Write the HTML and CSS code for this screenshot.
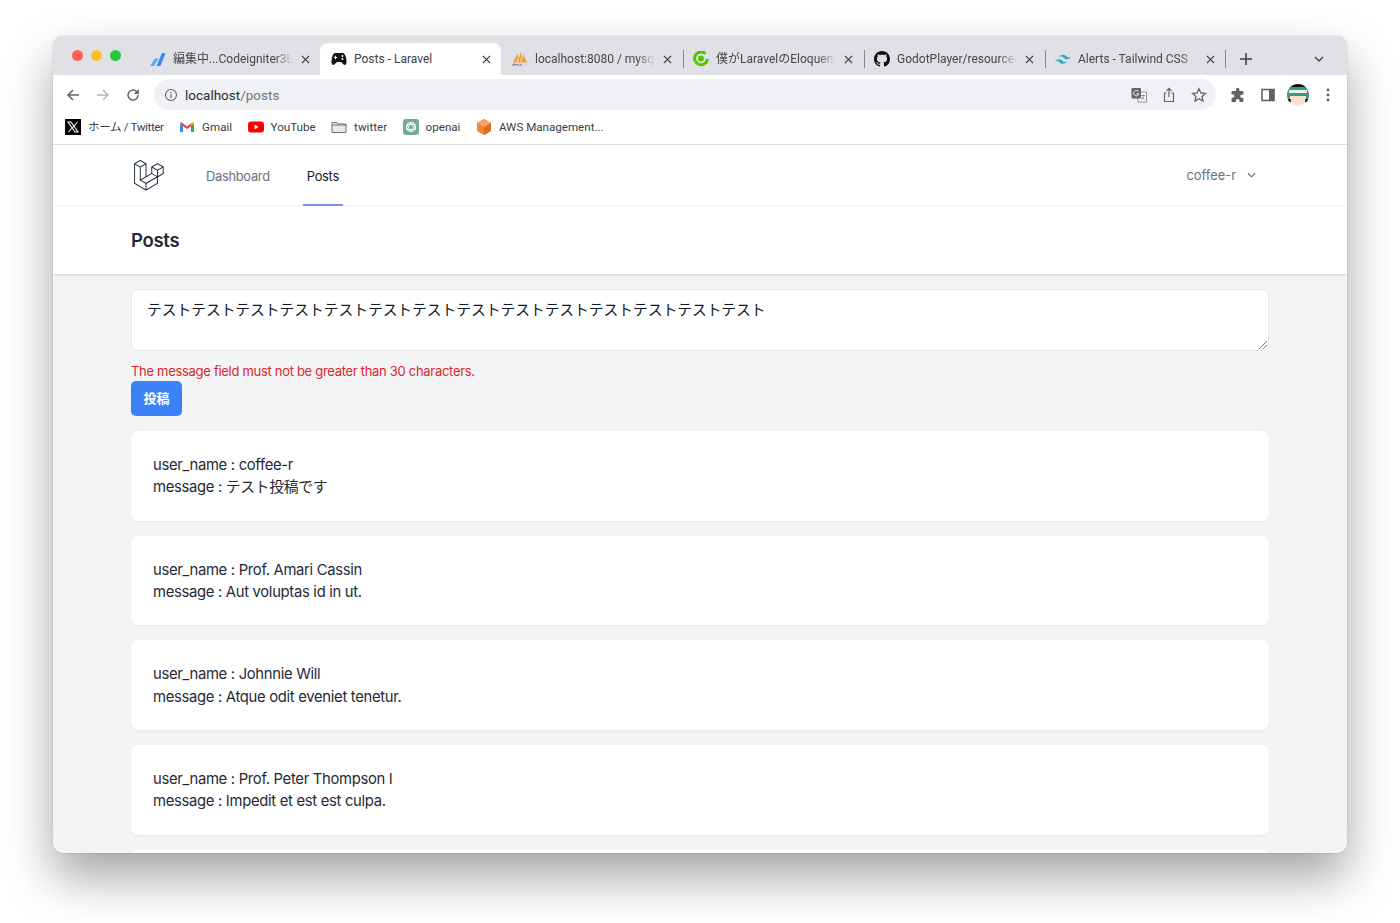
FILE: index.html
```html
<!DOCTYPE html>
<html lang="ja">
<head>
  <meta charset="UTF-8">
  <title>Posts - Laravel</title>
  <link rel="stylesheet" href="styles.css">
</head>
<body>
  <svg class="defs" width="0" height="0">
    <symbol id="close" viewBox="0 0 10 10"><path d="M1 1l8 8M9 1l-8 8" stroke="#3c4043" stroke-width="1.400"/></symbol>
  </svg>
  <div class="window">
    <div class="tabstrip">
      <div class="lights"><i class="red"></i><i class="yellow"></i><i class="green"></i></div>
      <div class="tab">
        <svg class="fav" viewBox="0 0 16 16"><path d="M0 15 5 7.500h3.500L4 15z" fill="#45b0f7"/><path d="M6.500 15 12 2h3.500L10.500 15z" fill="#3b86f5"/></svg>
        <span class="tab-title">編集中...Codeigniter3Laravel</span>
        <svg class="tab-x"><use href="#close"/></svg>
      </div>
      <div class="tab active">
        <svg class="fav" viewBox="0 0 16 16"><path d="M4.500 2h7c2 0 3 2 3.700 5.500.6 3.500.5 6-1.200 6.500-1.600.4-3-2.800-4-3h-4c-1 .2-2.400 3.400-4 3-1.700-.5-1.800-3-1.200-6.500C1.500 4 2.500 2 4.500 2z" fill="#111"/><path d="M4.500 4.800v3.400M2.800 6.500h3.400" stroke="#fff" stroke-width="1.100"/><circle cx="11.500" cy="5" r="1" fill="#fff"/><circle cx="11.500" cy="8" r="1" fill="#fff"/></svg>
        <span class="tab-title">Posts - Laravel</span>
        <svg class="tab-x"><use href="#close"/></svg>
      </div>
      <div class="tab">
        <svg class="fav" viewBox="0 0 16 16"><path d="M1 11.500 6 2l.5 9.500zM5.500 11.500 9 .5l1 11zM9.800 11.500l1.200-8 4 8z" fill="#f29a2e"/><path d="M3 11.500 6.500 6l.5 5.500zM7.500 11.500 9 6l1 5.500z" fill="#f7c27a"/><path d="M1 15v-2h1.500v1H1M4 15v-2l1 1 1-1v2M7.500 15l1-2 1 2" fill="none" stroke="#4a5a78" stroke-width=".6"/></svg>
        <span class="tab-title">localhost:8080 / mysql / laravel</span>
        <svg class="tab-x"><use href="#close"/></svg>
      </div>
      <div class="tab sep">
        <svg class="fav" viewBox="0 0 16 16"><path d="M12.500 2.800A6.400 6.400 0 1 0 14.400 8" fill="none" stroke="#52c400" stroke-width="3"/><circle cx="8" cy="7.500" r="2.900" fill="#52c400"/></svg>
        <span class="tab-title">僕がLaravelのEloquentを使う理由</span>
        <svg class="tab-x"><use href="#close"/></svg>
      </div>
      <div class="tab sep">
        <svg class="fav" viewBox="0 0 16 16"><path fill="#111" d="M8 0C3.580 0 0 3.580 0 8c0 3.540 2.290 6.530 5.470 7.590.4.070.55-.17.55-.38 0-.19-.01-.82-.01-1.490-2.010.37-2.530-.49-2.690-.94-.09-.23-.48-.94-.82-1.130-.28-.15-.68-.52-.01-.53.630-.01 1.080.58 1.230.82.720 1.210 1.870.87 2.330.66.070-.52.280-.87.510-1.070-1.780-.2-3.640-.89-3.640-3.950 0-.87.310-1.590.820-2.150-.08-.2-.36-1.020.08-2.120 0 0 .67-.21 2.200.820.640-.18 1.320-.27 2-.27s1.360.09 2 .27c1.530-1.040 2.200-.82 2.200-.82.440 1.100.16 1.920.08 2.120.51.560.82 1.270.82 2.150 0 3.070-1.870 3.750-3.650 3.950.29.250.54.730.54 1.480 0 1.070-.01 1.930-.01 2.200 0 .21.150.46.550.38A8.010 8.010 0 0 0 16 8c0-4.420-3.580-8-8-8z"/></svg>
        <span class="tab-title">GodotPlayer/resources/views</span>
        <svg class="tab-x"><use href="#close"/></svg>
      </div>
      <div class="tab sep sep-end">
        <svg class="fav" viewBox="1.400 1.500 13.200 13.200"><path d="M8 4.500C6.300 4.500 5.200 5.300 4.700 7c.7-.9 1.400-1.200 2.300-1 .5.100.9.500 1.300.9.700.7 1.400 1.400 3 1.400 1.700 0 2.800-.8 3.300-2.500-.7.900-1.400 1.200-2.300 1-.5-.1-.9-.5-1.300-.9C10.300 5.200 9.600 4.500 8 4.500zM4.700 8.300C3 8.300 1.900 9.100 1.400 10.800c.7-.9 1.400-1.200 2.300-1 .5.100.9.500 1.300.9.700.7 1.400 1.400 3 1.400 1.700 0 2.800-.8 3.300-2.500-.7.900-1.400 1.200-2.300 1-.5-.1-.9-.5-1.300-.9-.7-.7-1.400-1.400-3-1.400z" fill="#38a9b8"/></svg>
        <span class="tab-title">Alerts - Tailwind CSS</span>
        <svg class="tab-x"><use href="#close"/></svg>
      </div>
      <svg class="newtab" viewBox="0 0 12 12"><path d="M6 0v12M0 6h12" stroke="#3c4043" stroke-width="1.600"/></svg>
      <svg class="tabmenu" viewBox="0 0 10 6"><path d="M1 1l4 4 4-4" fill="none" stroke="#3c4043" stroke-width="1.300"/></svg>
    </div>

    <div class="toolbar">
      <svg class="tool" viewBox="0 0 16 16"><path d="M14 8H3M8 3 3 8l5 5" fill="none" stroke="#5f6368" stroke-width="1.500"/></svg>
      <svg class="tool dim" viewBox="0 0 16 16"><path d="M2 8h11M8 3l5 5-5 5" fill="none" stroke="#b4b6b9" stroke-width="1.500"/></svg>
      <svg class="tool" viewBox="0 0 16 16"><path d="M13 8a5 5 0 1 1-1.500-3.500L13 6" fill="none" stroke="#5f6368" stroke-width="1.500"/><path d="M13.800 2v5h-5z" fill="#5f6368"/></svg>
      <div class="omnibox">
        <svg class="info" viewBox="0 0 14 14"><circle cx="7" cy="7" r="5.500" fill="none" stroke="#5f6368" stroke-width="1.100"/><path d="M7 6.200V10M7 4v1.200" stroke="#5f6368" stroke-width="1.200"/></svg>
        <span class="url"><b>localhost</b>/posts</span>
        <svg class="omni-icon" viewBox="0 0 16 16"><path d="M6 5h9.500v10H7z" fill="#fff" stroke="#8a8d91"/><rect x=".5" y="1" width="9.500" height="10.500" rx="1" fill="#5f6368"/><path d="M7.500 4.500A2.700 2.700 0 1 0 8 6.800H5.500" fill="none" stroke="#fff" stroke-width="1"/><path d="M10 8.500h4M12 7.500v1M13.300 8.500c-.5 2-2 3.500-3.300 4M10.500 10c.8 1.300 2 2 3 2.400" fill="none" stroke="#5f6368" stroke-width=".7"/></svg>
        <svg class="omni-icon" viewBox="0 0 16 16"><path d="M5.500 6H3.500v8.500h9V6h-2M8 10V1.500M5.500 3.800 8 1.300l2.500 2.500" fill="none" stroke="#5f6368" stroke-width="1.200"/></svg>
        <svg class="omni-icon" viewBox="0 0 16 16"><path d="M8 1.800l1.900 4.200 4.500.5-3.400 3 1 4.500L8 11.700 4 14l1-4.500-3.400-3 4.500-.5z" fill="none" stroke="#5f6368" stroke-width="1.300"/></svg>
      </div>
      <svg class="tool-r" viewBox="0 0 16 16"><path d="M6 2.500a1.700 1.700 0 0 1 3.400 0V4h3a1 1 0 0 1 1 1v2.500h-1.300a1.800 1.800 0 0 0 0 3.600h1.300V14a1 1 0 0 1-1 1H9.500v-1.200a1.800 1.800 0 0 0-3.600 0V15H2.500a1 1 0 0 1-1-1v-3.200h1.200a1.800 1.800 0 0 0 0-3.600H1.500V5a1 1 0 0 1 1-1H6z" fill="#5f6368"/></svg>
      <svg class="tool-r" viewBox="0 0 16 16"><rect x="2" y="2.500" width="12" height="11" fill="none" stroke="#5f6368" stroke-width="1.600"/><rect x="9" y="2.500" width="5" height="11" fill="#5f6368"/></svg>
      <svg class="avatar" viewBox="0 0 22 22">
        <clipPath id="avatar-clip"><circle cx="11" cy="11" r="11"/></clipPath>
        <g clip-path="url(#avatar-clip)">
          <rect width="22" height="22" fill="#fbe1cf"/>
          <rect width="22" height="4" fill="#111"/>
          <path d="M0 15V3h22v12h-3v-3H3v3z" fill="#3c9a75"/>
          <rect x="2" y="6" width="18" height="3" fill="#e8f1ec"/>
          <path d="M0 15h3.500l.5 3H1zM22 15h-3.500l-.5 3h3z" fill="#111"/>
        </g>
      </svg>
      <svg class="dots" viewBox="0 0 4 16"><circle cx="2" cy="3" r="1.400" fill="#5f6368"/><circle cx="2" cy="8" r="1.400" fill="#5f6368"/><circle cx="2" cy="13" r="1.400" fill="#5f6368"/></svg>
    </div>

    <div class="bookmarks">
      <span class="bm bm-ja"><svg class="fav" viewBox="0 0 16 16"><rect width="16" height="16" fill="#000"/><path d="M3 3h3l7 10h-3zM12.500 3 3.500 13" fill="none" stroke="#fff" stroke-width="1.100"/></svg>ホーム / Twitter</span>
      <span class="bm"><svg class="fav" viewBox="0 0 16 16"><path d="M1 5l7 5 7-5-1-2-6 4.500L2 3z" fill="#ea4335"/><path d="M1 5v8h3V7z" fill="#4285f4"/><path d="M15 5v8h-3V7z" fill="#34a853"/><path d="M12 7l3-2-1-2-2 1.500z" fill="#fbbc04"/></svg>Gmail</span>
      <span class="bm"><svg class="fav" viewBox="0 0 16 16"><rect y="2.500" width="16" height="11" rx="3" fill="#f00"/><path d="M6.500 5.500v5l4-2.500z" fill="#fff"/></svg>YouTube</span>
      <span class="bm"><svg class="fav" viewBox="0 0 16 16"><path d="M1 3.500h5l1 1.500h8v8.500H1z" fill="#e8e9eb" stroke="#6e7175"/><path d="M1 6h14" stroke="#6e7175"/></svg>twitter</span>
      <span class="bm"><svg class="fav" viewBox="0 0 16 16"><rect width="16" height="16" rx="3" fill="#74aa9c"/><circle cx="8" cy="8" r="4.500" fill="none" stroke="#fff" stroke-width="1.100"/><path d="M8 3.500 12 10.500H4z" fill="none" stroke="#fff" stroke-width=".8"/><path d="M8 12.500 4 5.500h8z" fill="none" stroke="#fff" stroke-width=".8"/></svg>openai</span>
      <span class="bm"><svg class="fav" viewBox="0 0 16 16"><path d="M8 0 15 4v8l-7 4-7-4V4z" fill="#f58536"/><path d="M8 8 15 4v8l-7 4z" fill="#d96d1f"/><path d="M8 0 15 4 8 8 1 4z" fill="#f9a15c"/></svg>AWS Management...</span>
    </div>

    <div class="page">
      <nav class="nav">
        <svg class="logo" viewBox="0 0 50 52"><path fill="#1f2937" d="M49.626 11.564a.809.809 0 0 1 .028.209v10.972a.8.8 0 0 1-.402.694l-9.209 5.302V39.25c0 .286-.152.55-.4.694L20.42 51.01c-.044.025-.092.041-.14.058-.018.006-.035.017-.054.022a.805.805 0 0 1-.41 0c-.022-.006-.042-.018-.063-.026-.044-.016-.09-.03-.132-.054L.402 39.944A.801.801 0 0 1 0 39.25V6.334c0-.072.01-.142.028-.21.006-.023.02-.044.028-.067.015-.042.029-.085.051-.124.015-.026.037-.047.055-.071.023-.032.044-.065.071-.093.023-.023.053-.04.079-.06.029-.024.055-.05.088-.069h.001l9.61-5.533a.802.802 0 0 1 .8 0l9.61 5.533h.002c.032.02.059.045.088.068.026.02.055.038.078.06.028.029.048.062.072.094.017.024.04.045.054.071.023.04.036.082.052.124.008.023.022.044.028.068a.809.809 0 0 1 .028.209v20.559l8.008-4.611v-10.51c0-.07.01-.141.028-.208.007-.024.02-.045.028-.068.016-.042.03-.085.052-.124.015-.026.037-.047.054-.071.024-.032.044-.065.072-.093.023-.023.052-.04.078-.06.03-.024.056-.05.088-.069h.001l9.611-5.533a.801.801 0 0 1 .8 0l9.61 5.533c.034.02.06.045.09.068.025.02.054.038.077.06.028.029.048.062.072.094.018.024.04.045.054.071.023.039.036.082.052.124.009.023.022.044.028.068zm-1.574 10.718v-9.124l-3.363 1.936-4.646 2.675v9.124l8.01-4.611zm-9.61 16.505v-9.13l-4.57 2.61-13.05 7.448v9.216l17.62-10.144zM1.602 7.719v31.068L19.22 48.93v-9.214l-9.204-5.209-.003-.002-.004-.002c-.031-.018-.057-.044-.086-.066-.025-.02-.054-.036-.076-.058l-.002-.003c-.026-.025-.044-.056-.066-.084-.02-.027-.044-.05-.06-.078l-.001-.003c-.018-.03-.029-.066-.042-.1-.013-.03-.03-.058-.038-.09v-.001c-.01-.038-.012-.078-.016-.117-.004-.03-.012-.06-.012-.09v-.002-21.481L4.965 9.654 1.602 7.72zm8.81-5.994L2.405 6.334l8.005 4.609 8.006-4.61-8.006-4.608zm4.164 28.764l4.645-2.674V7.719l-3.363 1.936-4.646 2.675v20.096l3.364-1.937zM39.243 7.164l-8.006 4.609 8.006 4.609 8.005-4.61-8.005-4.608zm-.801 10.605l-4.646-2.675-3.363-1.936v9.124l4.645 2.674 3.364 1.937v-9.124zM20.02 38.33l11.743-6.704 5.87-3.35-8-4.606-9.211 5.303-8.395 4.833 7.993 4.524z"/></svg>
        <a class="nav-link">Dashboard</a>
        <a class="nav-link current">Posts</a>
        <div class="user">coffee-r
          <svg class="caret" viewBox="0 0 10 6"><path d="M1 1l4 4 4-4" fill="none" stroke="#6b7280" stroke-width="1.300"/></svg>
        </div>
      </nav>
      <header class="head"><h2>Posts</h2></header>
      <main class="main">
        <div class="composer">テストテストテストテストテストテストテストテストテストテストテストテストテストテスト
          <svg class="grip" viewBox="0 0 8 8"><path d="M0 8 8 0M4 8l4-4" stroke="#555" stroke-width=".8"/></svg>
        </div>
        <p class="error">The message field must not be greater than 30 characters.</p>
        <button class="submit">投稿</button>
        <div class="card">user_name : coffee-r<br>message : テスト投稿です</div>
        <div class="card">user_name : Prof. Amari Cassin<br>message : Aut voluptas id in ut.</div>
        <div class="card">user_name : Johnnie Will<br>message : Atque odit eveniet tenetur.</div>
        <div class="card">user_name : Prof. Peter Thompson I<br>message : Impedit et est est culpa.</div>
        <div class="card">user_name : Dr. Mara Lind<br>message : Qui et sint sed.</div>
      </main>
    </div>
  </div>
</body>
</html>
```

FILE: styles.css
```css
* { box-sizing:border-box; }
html, body { height:100%; }
body { margin:0; padding:36px 53px 70px; background:#fff; overflow:hidden;
       font-family:"Inter","Noto Sans CJK JP",sans-serif; color:#1f2937; }
svg { display:block; flex:none; }
.defs { position:absolute; }

.window { height:817px; display:flex; flex-direction:column; overflow:hidden;
          border-radius:10px; background:#fff;
          box-shadow:0 0 1px rgba(0,0,0,.45), 0 24px 48px rgba(0,0,0,.36); }

/* browser chrome */
.tabstrip { height:39px; flex:none; display:flex; align-items:flex-end; background:#dfe1e5;
            font-family:"Roboto","Noto Sans CJK JP",sans-serif; }
.lights { width:86px; height:39px; flex:none; display:flex; gap:8px; padding:14px 0 0 19px; }
.lights i { width:11px; height:11px; border-radius:50%; }
.lights .red { background:#ff5f57; }
.lights .yellow { background:#febc2e; }
.lights .green { background:#28c840; }
.tab { position:relative; width:181px; height:32px; flex:none; display:flex; align-items:center;
       padding:0 10px 0 11px; font-size:12px; color:#45474a; }
.tab.active { background:#fff; border-radius:8px 8px 0 0; color:#3c4043; }
.fav { width:16px; height:16px; }
.tab-title { flex:1; min-width:0; margin:0 8px 0 7px; line-height:16px; white-space:nowrap; overflow:hidden;
             -webkit-mask-image:linear-gradient(to right,#000 85%,transparent); }
.tab.active .tab-title { -webkit-mask-image:none; }
.tab-x { width:9px; height:9px; }
.sep::before, .sep-end::after { content:""; position:absolute; top:7px; height:18px; width:1px; background:#84878b; }
.sep::before { left:1px; }
.sep-end::after { right:-1px; }
.newtab { width:12px; height:12px; margin:0 0 10px 15px; }
.tabmenu { width:10px; height:6px; margin:0 0 13px 62px; }

.toolbar { height:36px; flex:none; display:flex; align-items:center; padding:3px 11px 0 12px; background:#fff; }
.tool { width:16px; height:16px; margin-right:14px; }
.omnibox { width:1062px; height:31px; display:flex; align-items:center; margin-left:-1px;
           padding:0 9px 0 10px; border-radius:16px; background:#f0f1f4;
           font-family:"Roboto",sans-serif; }
.info { width:14px; height:14px; }
.url { flex:1; margin-left:7px; font-size:13.500px; color:#70757a; }
.url b { font-weight:400; color:#2b2d30; }
.omni-icon { width:16px; height:16px; margin-left:14px; }
.tool-r { width:16px; height:16px; margin-left:14px; }
.avatar { width:22px; height:22px; margin-left:11px; }
.dots { width:4px; height:16px; margin-left:17px; }

.bookmarks { height:34px; flex:none; display:flex; align-items:center; gap:15.500px; padding:0 0 1px 12px;
             border-bottom:1px solid #dadce0; background:#fff; font-size:11.600px; line-height:16px; color:#3c4043;
             font-family:"Roboto","Noto Sans CJK JP",sans-serif; }
.bm { display:flex; align-items:center; gap:7px; white-space:nowrap; }
.bm-ja { letter-spacing:-.4px; }

/* the app */
.page { flex:1; min-height:0; display:flex; flex-direction:column; background:#f3f4f6; letter-spacing:-.3px; }
.nav { height:61px; flex:none; display:flex; align-items:stretch; padding:0 91px 0 81px;
       background:#fff; border-bottom:1px solid #f3f4f6; font-size:12.900px; }
.logo { width:30px; height:31px; align-self:center; margin-right:42px; }
.nav-link { display:flex; align-items:center; padding:3px 4px 0; margin:0 29px -1px -4px; color:#6b7280;
            border-bottom:2px solid transparent; }
.nav-link.current { color:#111827; border-bottom-color:#818cf8; margin-left:0; }
.user { margin-left:auto; display:flex; align-items:center; gap:11px; color:#6b7280; letter-spacing:0; }
.caret { width:9px; height:6px; }
.head { height:68px; flex:none; display:flex; align-items:center; padding:0 78px; background:#fff;
        box-shadow:0 1px 2px rgba(0,0,0,.12); }
.head h2 { margin:0; font-size:18.500px; font-weight:600; color:#1f2937; }
.main { flex:1; min-height:0; overflow:hidden; padding:15px 78px 0; }
.composer { position:relative; height:62px; padding:9px 15px; background:#fff; border:1px solid #e5e7eb;
            border-radius:6px; font-size:14.800px; line-height:22px; letter-spacing:-.07px; color:#111827; }
.grip { position:absolute; right:1px; bottom:1px; width:8px; height:8px; }
.error { margin:10px 0 0; font-size:13px; line-height:20px; color:#dc2626; }
.submit { display:block; width:51px; height:35px; padding:0 0 2px; border:0; border-radius:5px; background:#3b82f6;
          color:#fff; font:700 13px "Noto Sans CJK JP",sans-serif; }
.card { height:89.800px; margin-top:14.900px; padding:23px 22px; background:#fff; border-radius:7px;
        box-shadow:0 1px 2px rgba(0,0,0,.05); font-size:14.800px; line-height:22.400px; color:#1f2937; }
```
